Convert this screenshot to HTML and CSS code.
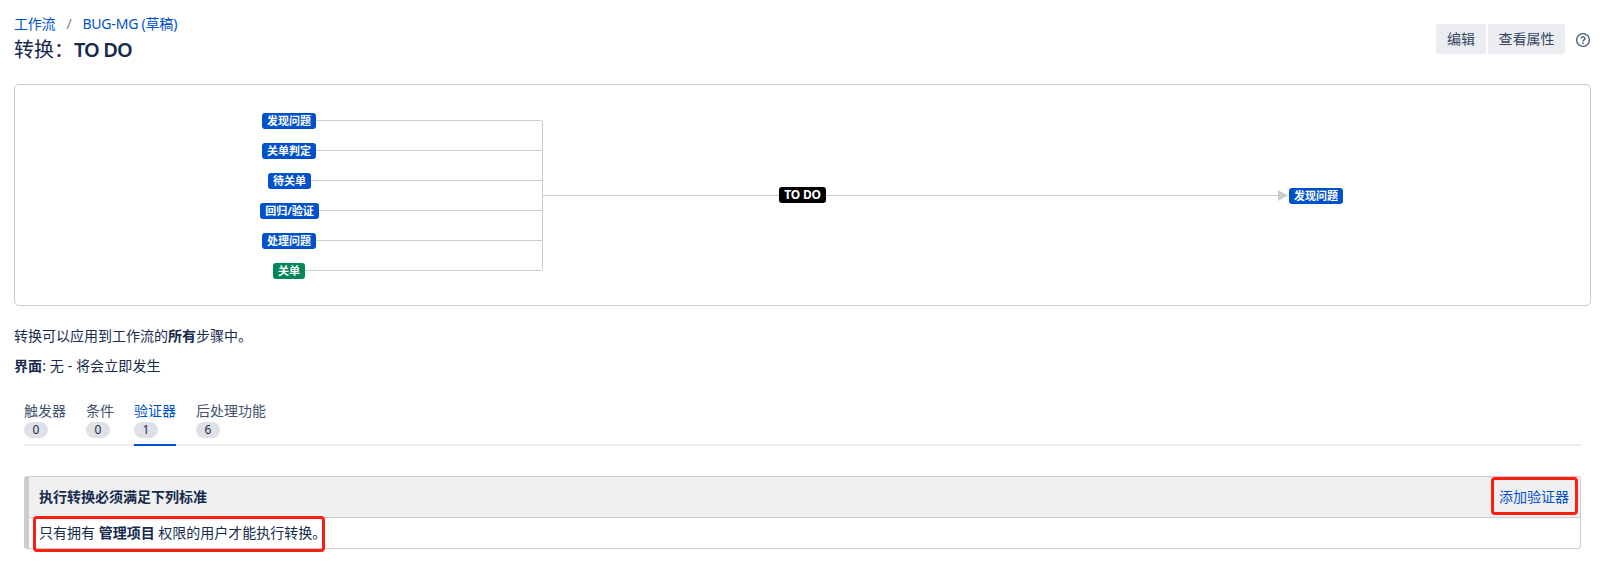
FILE: index.html
```html
<!DOCTYPE html>
<html lang="zh-CN">
<head>
<meta charset="utf-8">
<title>转换：TO DO</title>
<link rel="stylesheet" href="styles.css">
</head>
<body>
<header class="page-header">
  <div class="heading">
    <nav class="breadcrumbs"><a>工作流</a><span class="slash">/</span><a>BUG-MG (草稿)</a></nav>
    <h1 class="title">转换：<span class="title-name">TO DO</span></h1>
  </div>
  <div class="actions">
    <button class="button button-first">编辑</button>
    <button class="button button-last">查看属性</button>
    <svg class="help" width="16" height="16" viewBox="0 0 16 16" fill="none" stroke="#505f79">
      <circle cx="8" cy="8" r="6.4" stroke-width="1.4"/>
      <path d="M6.1 6.6a1.9 1.7 0 1 1 2.9 1.4c-.7.4-1 .7-1 1.4" stroke-width="1.5"/>
      <path d="M8 10.4v1.5" stroke-width="1.6"/>
    </svg>
  </div>
</header>
<section class="diagram">
  <svg class="edges" width="1575" height="220" viewBox="15 85 1575 220" fill="none" stroke="#ccc">
    <path d="M316 120.500H540.500Q542.500 120.500 542.500 122.500V268.500Q542.500 270.500 540.500 270.500H305"/>
    <path d="M316 150.500H542M311 180.500H542M319 210.500H542M316 240.500H542M543 195.500H1280"/>
    <path d="M1278 190L1288 195.500L1278 201Z" fill="#ccc" stroke="none"/>
  </svg>
  <span class="node n1">发现问题</span>
  <span class="node n2">关单判定</span>
  <span class="node n3">待关单</span>
  <span class="node n4">回归/验证</span>
  <span class="node n5">处理问题</span>
  <span class="node n6 done">关单</span>
  <span class="node transition">TO DO</span>
  <span class="node target">发现问题</span>
</section>
<p class="info">转换可以应用到工作流的<b>所有</b>步骤中。</p>
<p class="info screen"><b>界面</b>: 无 - 将会立即发生</p>
<main class="details">
  <ul class="tabs">
    <li class="tab">触发器<span class="count">0</span></li>
    <li class="tab">条件<span class="count">0</span></li>
    <li class="tab active">验证器<span class="count">1</span></li>
    <li class="tab">后处理功能<span class="count">6</span></li>
  </ul>
  <section class="criteria">
    <div class="criteria-head"><b>执行转换必须满足下列标准</b><a class="add">添加验证器<span class="mark mark-add"></span></a></div>
    <div class="criteria-row"><span class="rule">只有拥有 <b>管理项目</b> 权限的用户才能执行转换。</span><span class="mark mark-rule"></span></div>
  </section>
</main>
</body>
</html>
```
FILE: styles.css
```css
* { box-sizing: border-box; }
body {
  margin: 0;
  padding: 14px 16px 0 14px;
  height: 570px;
  overflow: hidden;
  background: #fff;
  color: #172b4d;
  font: 14px/20px "Noto Sans", "Noto Sans CJK SC", sans-serif;
}
a { color: #0052cc; }
b { font-weight: 700; }
.page-header { display: flex; justify-content: space-between; height: 70px; }
.breadcrumbs { display: flex; height: 20px; letter-spacing: -0.2px; }
.slash { width: 27px; text-align: center; color: #7a869a; }
.title { margin: 4px 0 0; font-size: 20px; line-height: 24px; font-weight: 400; }
.title-name { font-weight: 600; letter-spacing: -0.9px; }
.actions { display: flex; gap: 2px; margin-top: 10px; }
.button {
  height: 30px;
  padding: 0;
  border: 0;
  background: #ebecf0;
  color: #344563;
  font: inherit;
}
.button-first { width: 50px; border-radius: 3px 0 0 3px; }
.button-last { width: 77px; border-radius: 0 3px 3px 0; }
.help { margin: 8px 0 0 8px; }
.diagram {
  position: relative;
  width: 1577px;
  height: 222px;
  margin-bottom: 20px;
  border: 1px solid #ccc;
  border-radius: 5px;
}
.edges { display: block; }
.node {
  position: absolute;
  width: 54px;
  height: 16px;
  border-radius: 3px;
  background: #0052cc;
  color: #fff;
  font-size: 11px;
  font-weight: 700;
  line-height: 16px;
  text-align: center;
  white-space: nowrap;
}
.n1 { left: 247px; top: 28px; }
.n2 { left: 247px; top: 58px; }
.n3 { left: 253px; top: 88px; width: 43px; }
.n4 { left: 245px; top: 118px; width: 59px; }
.n5 { left: 247px; top: 148px; }
.n6 { left: 258px; top: 178px; width: 32px; }
.done { background: #00875a; }
.transition { left: 764px; top: 102px; width: 47px; background: #000; font-size: 12px; letter-spacing: -0.2px; }
.target { left: 1274px; top: 103px; }
.info { margin: 0 0 10px; }
.screen { letter-spacing: 0.1px; }
.details { padding: 14px 10px 0; }
.tabs {
  display: flex;
  gap: 20px;
  height: 46px;
  margin: 0;
  padding: 0;
  border-bottom: 2px solid #ebecf0;
  list-style: none;
}
.tab { height: 46px; padding-top: 1px; color: #42526e; }
.tab.active { color: #0052cc; border-bottom: 2px solid #0052cc; }
.count {
  display: block;
  width: 24px;
  height: 16px;
  margin-top: 1px;
  border-radius: 8px;
  background: #dfe1e6;
  color: #172b4d;
  font-size: 12px;
  line-height: 16px;
  text-align: center;
}
.criteria {
  height: 73px;
  margin-top: 30px;
  border: 1px solid #ccc;
  border-left-width: 5px;
  border-radius: 3px;
}
.criteria-head {
  display: flex;
  justify-content: space-between;
  height: 41px;
  padding: 10px 11px 0 10px;
  border-bottom: 1px solid #ccc;
  background: #f0f0f0;
}
.criteria-row { position: relative; padding: 5px 10px; }
.add { position: relative; }
.mark { position: absolute; border: 3px solid #ff1e12; border-radius: 4px; }
.mark-add { left: -8px; top: -10px; width: 87px; height: 38px; }
.mark-rule { left: 4px; top: -2px; width: 292px; height: 36px; }
```
